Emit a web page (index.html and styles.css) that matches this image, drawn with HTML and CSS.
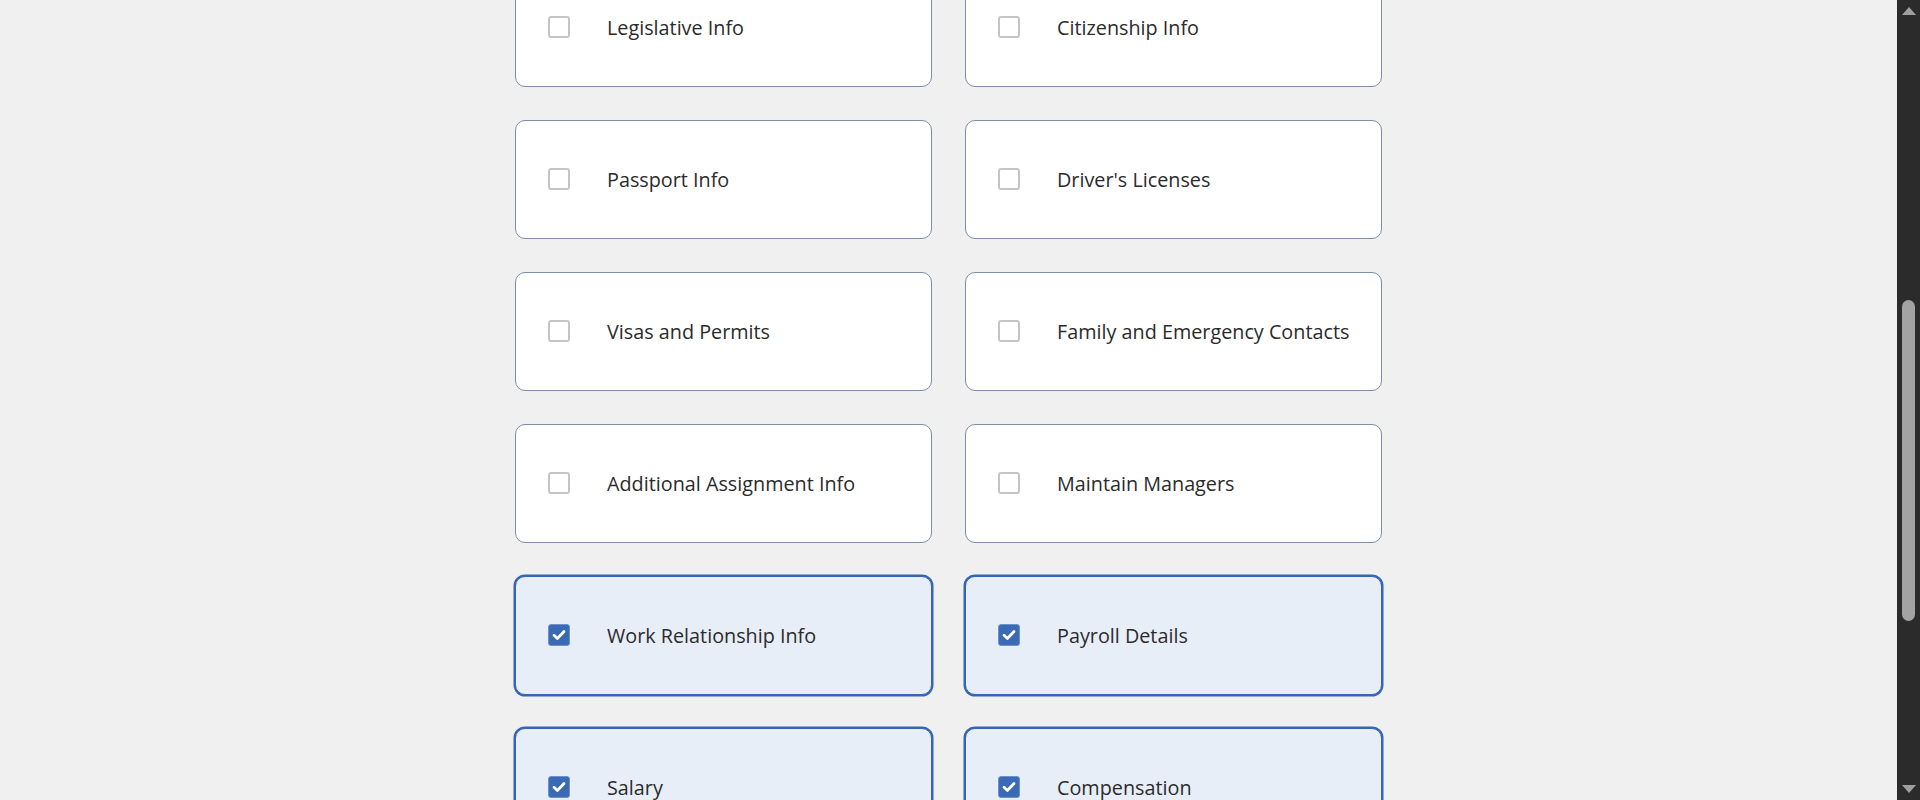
FILE: index.html
```html
<!DOCTYPE html>
<html lang="en">
<head>
<meta charset="utf-8">
<title>Options</title>
<link rel="stylesheet" href="styles.css">
</head>
<body>
<div class="page">
  <main class="main">
    <div class="grid">
      <label class="card"><span class="box"></span><span class="label">Legislative Info</span></label>
      <label class="card"><span class="box"></span><span class="label">Citizenship Info</span></label>
      <label class="card"><span class="box"></span><span class="label">Passport Info</span></label>
      <label class="card"><span class="box"></span><span class="label">Driver's Licenses</span></label>
      <label class="card"><span class="box"></span><span class="label">Visas and Permits</span></label>
      <label class="card"><span class="box"></span><span class="label">Family and Emergency Contacts</span></label>
      <label class="card"><span class="box"></span><span class="label">Additional Assignment Info</span></label>
      <label class="card"><span class="box"></span><span class="label">Maintain Managers</span></label>
      <label class="card selected"><span class="box checked"><svg viewBox="0 0 22 22" width="22" height="22"><path d="M6 11.2 L9.4 14.4 L16 7.6" fill="none" stroke="#fff" stroke-width="2.8" stroke-linecap="round" stroke-linejoin="round"/></svg></span><span class="label">Work Relationship Info</span></label>
      <label class="card selected"><span class="box checked"><svg viewBox="0 0 22 22" width="22" height="22"><path d="M6 11.2 L9.4 14.4 L16 7.6" fill="none" stroke="#fff" stroke-width="2.8" stroke-linecap="round" stroke-linejoin="round"/></svg></span><span class="label">Payroll Details</span></label>
      <label class="card selected"><span class="box checked"><svg viewBox="0 0 22 22" width="22" height="22"><path d="M6 11.2 L9.4 14.4 L16 7.6" fill="none" stroke="#fff" stroke-width="2.8" stroke-linecap="round" stroke-linejoin="round"/></svg></span><span class="label">Salary</span></label>
      <label class="card selected"><span class="box checked"><svg viewBox="0 0 22 22" width="22" height="22"><path d="M6 11.2 L9.4 14.4 L16 7.6" fill="none" stroke="#fff" stroke-width="2.8" stroke-linecap="round" stroke-linejoin="round"/></svg></span><span class="label">Compensation</span></label>
    </div>
  </main>
  <div class="scrollbar">
    <span class="arrow up"></span>
    <span class="thumb"></span>
    <span class="arrow down"></span>
  </div>
</div>
</body>
</html>
```
FILE: styles.css
```css
html, body {
  margin: 0;
  padding: 0;
  height: 100%;
  overflow: hidden;
}
body {
  background: #f0f0f0;
  font-family: "Open Sans", "Noto Sans", "Liberation Sans", sans-serif;
  color: #2b2b2b;
}
.page {
  display: flex;
  height: 800px;
}
.main {
  flex: 1;
  overflow: hidden;
  display: flex;
  justify-content: center;
}
.grid {
  display: grid;
  grid-template-columns: 417px 417px;
  grid-auto-rows: 119px;
  column-gap: 33px;
  row-gap: 33px;
  margin-top: -32px;
  align-content: start;
}
.card {
  box-sizing: border-box;
  display: flex;
  align-items: center;
  background: #ffffff;
  border: 1px solid #7b8fa6;
  border-radius: 10px;
  padding: 0 32px;
}
.card.selected {
  background: #e8eef8;
  border-color: #3566b3;
  box-shadow: 0 0 0 1.5px #3566b3;
}
.box {
  box-sizing: border-box;
  flex: none;
  width: 22px;
  height: 22px;
  border: 2px solid #c4c4c4;
  border-radius: 3px;
  background: #fff;
  margin-top: -2px;
  display: flex;
}
.box.checked {
  background: #3a69b6;
  border: 1px solid #6e92cc;
  align-items: center;
  justify-content: center;
}
.box.checked svg {
  flex: none;
  margin: -1px;
}
.label {
  margin-left: 37px;
  font-size: 19.8px;
  line-height: 26px;
  white-space: nowrap;
}
.scrollbar {
  flex: none;
  width: 23px;
  background: #2b2b2b;
  display: flex;
  flex-direction: column;
  align-items: center;
}
.arrow {
  width: 0;
  height: 0;
  border-left: 7px solid transparent;
  border-right: 7px solid transparent;
}
.arrow.up {
  margin-top: 7px;
  border-bottom: 8px solid #9f9f9f;
}
.arrow.down {
  margin-top: auto;
  margin-bottom: 7px;
  border-top: 8px solid #9f9f9f;
}
.thumb {
  width: 13px;
  height: 321px;
  margin-top: 285px;
  border-radius: 7px;
  background: #a3a3a3;
}
```
